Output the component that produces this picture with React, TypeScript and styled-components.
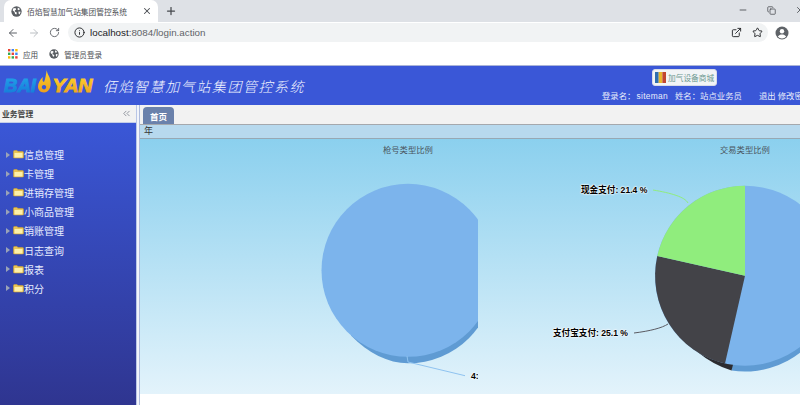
import { createGlobalStyle, styled } from "styled-components";
import { ArrowLeft, ArrowRight, ChevronsLeft, Copy, ExternalLink, Info, Minus, Plus, RotateCw, Star, X } from "lucide-react";

const GlobalStyle = createGlobalStyle`
  html, body {
    margin: 0;
    height: 100%;
    overflow: hidden;
    background: #fff;
    font-family: "Liberation Sans", "Noto Sans CJK SC", sans-serif;
  }
`;

const Page = styled.div`
  width: 800px;
  height: 405px;
  display: flex;
  flex-direction: column;
  overflow: hidden;
`;

const TabStrip = styled.div`
  height: 22px;
  flex-shrink: 0;
  background: #dee1e6;
  display: flex;
  align-items: flex-end;
  padding-left: 4px;
  color: #45484d;
`;

const Tab = styled.div`
  width: 154px;
  height: 22px;
  background: #fff;
  border-radius: 7px 7px 0 0;
  display: flex;
  align-items: center;
  gap: 5px;
  padding: 0 6px 0 7px;
  box-sizing: border-box;
  font-size: 7.7px;
  color: #4a4d52;
  svg {
    flex-shrink: 0;
  }
`;

const TabTitle = styled.span`
  flex: 1;
  min-width: 0;
  white-space: nowrap;
`;

const NewTab = styled.div`
  width: 26px;
  height: 22px;
  display: flex;
  align-items: center;
  justify-content: center;
`;

const WindowButtons = styled.div`
  margin-left: auto;
  display: flex;
  align-items: center;
  gap: 19px;
  height: 20px;
  margin-bottom: 2px;
  margin-right: -5px;
`;

const AddressBar = styled.div`
  height: 21px;
  flex-shrink: 0;
  display: flex;
  align-items: center;
  background: #fff;
  color: #5f6368;
`;

const NavIcons = styled.div`
  width: 68px;
  display: flex;
  gap: 9px;
  padding-left: 7px;
  box-sizing: border-box;
  align-items: center;
`;

const Omnibox = styled.div`
  width: 700px;
  height: 19px;
  border-radius: 10px;
  background: #f1f3f4;
  display: flex;
  align-items: center;
  gap: 5px;
  padding: 0 5px 0 6px;
  box-sizing: border-box;
  font-size: 9.8px;
  color: #202124;
`;

const Url = styled.span`
  flex: 1;
`;

const UrlPath = styled.span`
  color: #5f6368;
`;

const OmniIcons = styled.div`
  display: flex;
  gap: 10px;
  align-items: center;
`;

const Profile = styled.div`
  margin-left: 7px;
  display: flex;
`;

const Bookmarks = styled.div`
  height: 22px;
  flex-shrink: 0;
  display: flex;
  align-items: center;
  gap: 6px;
  padding-left: 8px;
  font-size: 7.6px;
  color: #4a4d52;
  background: #fff;
`;

const Bookmark = styled.span`
  display: flex;
  align-items: center;
  gap: 5px;
  margin-right: 5px;
`;

const AppHeader = styled.header`
  height: 40px;
  box-sizing: border-box;
  background: #3a57d7;
  border-top: 1px solid #aab4d8;
  display: flex;
  position: relative;
  flex-shrink: 0;
`;

const LogoBox = styled.div`
  width: 97px;
  padding: 2px 0 0 3px;
`;

const SystemTitle = styled.div`
  margin: 10px 0 0 3px;
  font-family: "Noto Sans CJK SC", sans-serif;
  font-style: italic;
  font-weight: 300;
  font-size: 14px;
  letter-spacing: 1.55px;
  color: #f2f5ff;
  white-space: nowrap;
`;

const HeaderRight = styled.div`
  position: absolute;
  left: 602px;
  top: 3px;
  width: 220px;
  display: flex;
  flex-direction: column;
  font-size: 8.4px;
  color: #e8ecfb;
`;

const ShopButton = styled.div`
  margin-left: 50px;
  width: 65px;
  height: 17px;
  box-sizing: border-box;
  border-radius: 3px;
  background: #f2f4f6;
  border: 1px solid #d7dbe6;
  display: flex;
  align-items: center;
  gap: 2px;
  padding-left: 2px;
  color: #6f9a92;
  font-size: 7.7px;
  white-space: nowrap;
`;

const UserLine = styled.div`
  margin-top: 4px;
  display: flex;
  white-space: nowrap;
  line-height: 12px;
`;

const UserItem = styled.span<{ $gap: number }>`
  margin-right: ${(p) => p.$gap}px;
`;

const UserName = styled.span`
  margin-left: 1px;
  letter-spacing: 0.3px;
`;

const Body = styled.div`
  flex: 1;
  display: flex;
  min-height: 0;
  background: #fff;
`;

const Sidebar = styled.aside`
  width: 136px;
  flex-shrink: 0;
  display: flex;
  flex-direction: column;
`;

const SideHead = styled.div`
  height: 18px;
  flex-shrink: 0;
  box-sizing: border-box;
  background: #f2f2f2;
  border-bottom: 1px solid #c3cde8;
  display: flex;
  align-items: center;
  justify-content: space-between;
  padding: 0 4px 0 2px;
  font-size: 7.8px;
  font-weight: bold;
  color: #444;
`;

const MenuList = styled.ul`
  flex: 1;
  list-style: none;
  margin: 0;
  padding: 22px 0 0 6px;
  background: linear-gradient(#3a57d7, #2f3590);
`;

const MenuRow = styled.li`
  height: 19.1px;
  display: flex;
  align-items: center;
  font-size: 10px;
  color: #e8edff;
`;

const Caret = styled.span`
  width: 0;
  height: 0;
  border-left: 4px solid #9aa3b8;
  border-top: 3.5px solid transparent;
  border-bottom: 3.5px solid transparent;
  margin-right: 3px;
`;

const FolderIcon = styled.svg`
  flex-shrink: 0;
`;

const Splitter = styled.div`
  width: 4px;
  flex-shrink: 0;
  background: #f2f4fa;
  border-left: 1px solid #b9c6e6;
  border-right: 1px solid #aebbdc;
  box-sizing: border-box;
`;

const Main = styled.main`
  flex: 1;
  min-width: 0;
  display: flex;
  flex-direction: column;
`;

const TabBar = styled.div`
  height: 20px;
  box-sizing: border-box;
  flex-shrink: 0;
  background: #f2f2f2;
  border-bottom: 1px solid #a5a8ad;
  padding-left: 3px;
  display: flex;
  align-items: flex-end;
`;

const HomeTab = styled.div`
  width: 31px;
  height: 17px;
  border-radius: 4px 4px 0 0;
  background: #6a81ab;
  color: #fff;
  font-size: 8.5px;
  font-weight: bold;
  display: flex;
  align-items: center;
  justify-content: center;
`;

const YearBar = styled.div`
  height: 14px;
  box-sizing: border-box;
  flex-shrink: 0;
  background: #b7d9ee;
  border-bottom: 1px solid #97a8b4;
  padding-left: 4px;
  font-size: 9px;
  line-height: 13px;
  color: #333;
`;

const ChartPanel = styled.div`
  height: 255px;
  flex-shrink: 0;
  display: flex;
  background: linear-gradient(#8bd0ee, #e3f3fb);
  overflow: hidden;
`;

const ChartColumn = styled.section<{ $width: number }>`
  width: ${(p) => p.$width}px;
  flex-shrink: 0;
  position: relative;
  overflow: hidden;
`;

const ChartTitle = styled.div<{ $left: number }>`
  position: absolute;
  top: 4px;
  left: ${(p) => p.$left}px;
  font-size: 8.3px;
  color: #4a5560;
  white-space: nowrap;
`;

const ChartSvg = styled.svg`
  position: absolute;
  inset: 0;
  width: 100%;
  height: 100%;
`;

const PieLabel = styled.div<{ $left: number; $top: number }>`
  position: absolute;
  left: ${(p) => p.$left}px;
  top: ${(p) => p.$top}px;
  font-size: 8.6px;
  font-weight: bold;
  color: #000;
  white-space: nowrap;
  text-shadow: 0 0 2px #fff, 0 0 2px #fff, 0 0 2px #fff;
`;

const menuItems = ["信息管理", "卡管理", "进销存管理", "小商品管理", "销账管理", "日志查询", "报表", "积分"];

const Globe = ({ size }: { size: number }) => (
  <svg width={size} height={size} viewBox="0 0 16 16">
    <circle cx="8" cy="8" r="7.5" fill="#5a5e63" />
    <path d="M3 3.5l3.5-.5 1 2-2 1.5.5 2 2.5 1-.5 3-2-1-1-3-2.5-2zM10 2l3 2.5-1.5 1.5-2-1zM11 8l3 .5-1.5 4-1.5-1.5z" fill="#fff" />
  </svg>
);

const AppsGrid = () => {
  const colors = ["#ea4335", "#4285f4", "#fbbc04", "#34a853", "#ea4335", "#4285f4", "#fbbc04", "#34a853", "#ea4335"];
  return (
    <svg width="10" height="10" viewBox="0 0 10 10">
      {colors.map((c, i) => (
        <rect key={i} x={(i % 3) * 3.6} y={Math.floor(i / 3) * 3.6} width="2.4" height="2.4" fill={c} />
      ))}
    </svg>
  );
};

const Avatar = () => (
  <svg width="14" height="14" viewBox="0 0 14 14">
    <circle cx="7" cy="7" r="6.5" fill="#5f6368" />
    <circle cx="7" cy="5.2" r="2.2" fill="#fff" />
    <path d="M2.8 10.6c1-1.6 2.6-2.2 4.2-2.2s3.2.6 4.2 2.2a5.4 5.4 0 0 1-8.4 0z" fill="#fff" />
  </svg>
);

const Folder = () => (
  <FolderIcon width="11" height="9" viewBox="0 0 11 9">
    <path d="M.5 1.5Q.5.5 1.5.5H4l1 1h4.5q1 0 1 1v5q0 .5-1 .5h-8q-1 0-1-.5z" fill="#e9c455" stroke="#c9a236" strokeWidth=".6" />
    <rect x="1.5" y="3" width="8" height="4.5" fill="#fdf0a8" />
  </FolderIcon>
);

const Logo = () => (
  <svg width="94" height="30" viewBox="0 0 94 30">
    <defs>
      <linearGradient id="blueInk" x1="0" x2="0" y1="0" y2="1">
        <stop offset="0" stopColor="#22a6ea" />
        <stop offset="1" stopColor="#1478d8" />
      </linearGradient>
      <linearGradient id="goldInk" x1="0" x2="0" y1="0" y2="1">
        <stop offset="0" stopColor="#ffd52c" />
        <stop offset="1" stopColor="#eb9f1e" />
      </linearGradient>
    </defs>
    <text x="1" y="23.7" fontFamily="Liberation Sans" fontWeight="bold" fontStyle="italic" fontSize="19" fill="url(#blueInk)" stroke="url(#blueInk)" strokeWidth=".9" textLength="32" lengthAdjust="spacingAndGlyphs">BAI</text>
    <path
      fillRule="evenodd"
      d="M44 1C43 5 47 8 47.5 13 48.5 20 45 24.5 41 24.5 37 24.5 35 21.5 35 18.5 35 15 37 11.5 40 9 39 12 39.5 13.5 41 14 42.5 11 43 6 44 1zM41 17a2.2 2.2 0 1 0 .01 0z"
      fill="url(#goldInk)"
    />
    <text x="49.5" y="23.7" fontFamily="Liberation Sans" fontWeight="bold" fontStyle="italic" fontSize="19" fill="url(#goldInk)" stroke="url(#goldInk)" strokeWidth=".9" textLength="40" lengthAdjust="spacingAndGlyphs">YAN</text>
  </svg>
);

const ShopIcon = () => (
  <svg width="11" height="11" viewBox="0 0 11 11">
    <rect width="3.7" height="11" fill="#2f6fb0" />
    <rect x="3.7" width="3.7" height="11" fill="#e7b52c" />
    <rect x="7.4" width="3.6" height="11" fill="#c2452f" />
  </svg>
);

export default function App() {
  return (
    <Page>
      <GlobalStyle />
      <TabStrip>
        <Tab>
          <Globe size={11} />
          <TabTitle>佰焰智慧加气站集团管控系统</TabTitle>
          <X size={10} strokeWidth={2.5} />
        </Tab>
        <NewTab>
          <Plus size={12} strokeWidth={2.5} />
        </NewTab>
        <WindowButtons>
          <Minus size={10} />
          <Copy size={9} />
          <X size={10} />
        </WindowButtons>
      </TabStrip>
      <AddressBar>
        <NavIcons>
          <ArrowLeft size={12} />
          <ArrowRight size={12} color="#bcc0c4" />
          <RotateCw size={11} />
        </NavIcons>
        <Omnibox>
          <Info size={11} />
          <Url>
            localhost<UrlPath>:8084/login.action</UrlPath>
          </Url>
          <OmniIcons>
            <ExternalLink size={11} />
            <Star size={11} />
          </OmniIcons>
        </Omnibox>
        <Profile>
          <Avatar />
        </Profile>
      </AddressBar>
      <Bookmarks>
        <Bookmark>
          <AppsGrid />
          应用
        </Bookmark>
        <Bookmark>
          <Globe size={10} />
          管理员登录
        </Bookmark>
      </Bookmarks>
      <AppHeader>
        <LogoBox>
          <Logo />
        </LogoBox>
        <SystemTitle>佰焰智慧加气站集团管控系统</SystemTitle>
        <HeaderRight>
          <ShopButton>
            <ShopIcon />
            加气设备商城
          </ShopButton>
          <UserLine>
            <UserItem $gap={7}>
              登录名：<UserName>siteman</UserName>
            </UserItem>
            <UserItem $gap={17}>姓名：站点业务员</UserItem>
            <UserItem $gap={2}>退出</UserItem>
            <UserItem $gap={0}>修改密码</UserItem>
          </UserLine>
        </HeaderRight>
      </AppHeader>
      <Body>
        <Sidebar>
          <SideHead>
            业务管理
            <ChevronsLeft size={11} color="#8a8f99" />
          </SideHead>
          <MenuList>
            {menuItems.map((item) => (
              <MenuRow key={item}>
                <Caret />
                <Folder />
                {item}
              </MenuRow>
            ))}
          </MenuList>
        </Sidebar>
        <Splitter />
        <Main>
          <TabBar>
            <HomeTab>首页</HomeTab>
          </TabBar>
          <YearBar>年</YearBar>
          <ChartPanel>
            <ChartColumn $width={338}>
              <ChartTitle $left={243}>枪号类型比例</ChartTitle>
              <ChartSvg viewBox="0 0 338 255">
                <path d="M211 196.5C228 214 248 224.3 268 224.3A86.5 86.5 0 0 0 354.5 137.8L268 131.3z" fill="#5f9bd3" />
                <circle cx="268" cy="131.3" r="86.5" fill="#7cb4ec" />
                <path d="M267 217l1 6 57 13.7" fill="none" stroke="#8fc3f0" strokeWidth="1" />
              </ChartSvg>
              <PieLabel $left={331} $top={232}>4:</PieLabel>
            </ChartColumn>
            <ChartColumn $width={322}>
              <ChartTitle $left={242}>交易类型比例</ChartTitle>
              <ChartSvg viewBox="0 0 322 255">
                <path d="M253.5 231.6A90 90 0 0 0 357 142.7L267 136.7z" fill="#5f9bd3" />
                <path d="M219 212.6Q235 226 253.5 231.6L256 222 247 222z" fill="#2c2c30" />
                <circle cx="267" cy="136.7" r="90" fill="#7cb4ec" />
                <path d="M267 136.7L247 224.5A90 90 0 0 1 179.3 117z" fill="#434348" />
                <path d="M267 136.7L179.3 117A90 90 0 0 1 267 46.7z" fill="#90ed7d" />
                <path d="M175 51c18 3 32 7 35 13" fill="none" stroke="#90ed7d" strokeWidth="1" />
                <path d="M156 194c16-2 28-5 34-9" fill="none" stroke="#5b5b62" strokeWidth="1" />
              </ChartSvg>
              <PieLabel $left={103} $top={44}>现金支付: 21.4 %</PieLabel>
              <PieLabel $left={75} $top={187}>支付宝支付: 25.1 %</PieLabel>
            </ChartColumn>
          </ChartPanel>
        </Main>
      </Body>
    </Page>
  );
}
